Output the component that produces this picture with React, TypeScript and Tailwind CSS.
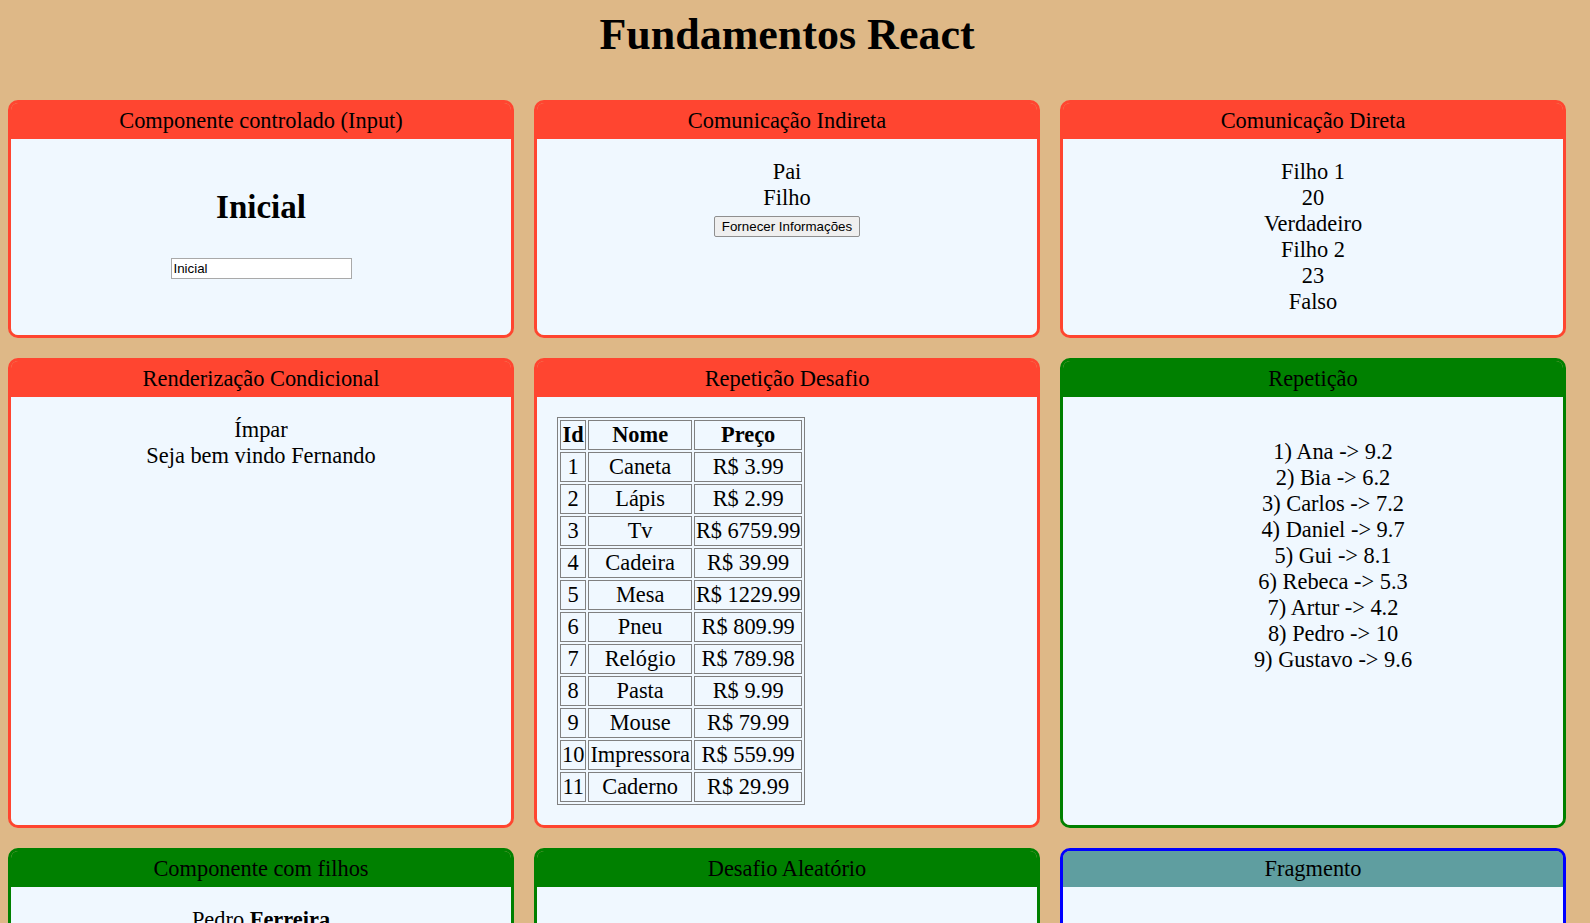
import React from "react";

type CardColor = "red" | "green" | "blue";

const cardStyles: Record<CardColor, { border: string; title: string }> = {
  red: { border: "border-[#ff4530]", title: "bg-[#ff4530]" },
  green: { border: "border-[#008000]", title: "bg-[#008000]" },
  blue: { border: "border-[#0000ff]", title: "bg-[#5f9ea0]" },
};

function Card({
  titulo,
  color = "red",
  children,
}: {
  titulo: string;
  color?: CardColor;
  children?: React.ReactNode;
}) {
  const s = cardStyles[color];
  return (
    <div className={`w-[506px] flex flex-col rounded-[10px] border-[3px] overflow-hidden ${s.border}`}>
      <div className={`${s.title} text-center text-[22.4px] p-[5px]`}>{titulo}</div>
      <div className="flex-1 bg-[#f0f8ff] p-[20px] text-center text-[22.4px]">{children}</div>
    </div>
  );
}

const produtos = [
  { id: 1, nome: "Caneta", preco: 3.99 },
  { id: 2, nome: "Lápis", preco: 2.99 },
  { id: 3, nome: "Tv", preco: 6759.99 },
  { id: 4, nome: "Cadeira", preco: 39.99 },
  { id: 5, nome: "Mesa", preco: 1229.99 },
  { id: 6, nome: "Pneu", preco: 809.99 },
  { id: 7, nome: "Relógio", preco: 789.98 },
  { id: 8, nome: "Pasta", preco: 9.99 },
  { id: 9, nome: "Mouse", preco: 79.99 },
  { id: 10, nome: "Impressora", preco: 559.99 },
  { id: 11, nome: "Caderno", preco: 29.99 },
];

const alunos = [
  { id: 1, nome: "Ana", nota: 9.2 },
  { id: 2, nome: "Bia", nota: 6.2 },
  { id: 3, nome: "Carlos", nota: 7.2 },
  { id: 4, nome: "Daniel", nota: 9.7 },
  { id: 5, nome: "Gui", nota: 8.1 },
  { id: 6, nome: "Rebeca", nota: 5.3 },
  { id: 7, nome: "Artur", nota: 4.2 },
  { id: 8, nome: "Pedro", nota: 10 },
  { id: 9, nome: "Gustavo", nota: 9.6 },
];

const cell = "border border-[#808080] px-[1px] py-[1px] text-center";

export default function App() {
  const [texto, setTexto] = React.useState("Inicial");

  return (
    <div className="min-h-screen bg-[#deb887] text-black font-['Liberation_Serif','Times_New_Roman',serif] leading-[normal]">
      <div className="w-[1574px] px-[8px] pt-[9px] pb-[40px]">
        <h1 className="text-center text-[44px] font-bold leading-[51px] mb-[40px]">
          Fundamentos React
        </h1>

        <div className="flex flex-wrap gap-x-[20px] gap-y-[20px]">
          <Card titulo="Componente controlado (Input)">
            <h2 className="text-[33px] font-bold leading-[38px] mt-[29px]">{texto}</h2>
            <input
              type="text"
              value={texto}
              onChange={(e) => setTexto(e.target.value)}
              className="block mx-auto mt-[32px] w-[181px] h-[21px] bg-white border border-[#a9a9a9] px-[2px] text-left text-[13.33px] leading-[normal] font-['Liberation_Sans',Arial,sans-serif] outline-none"
            />
          </Card>

          <Card titulo="Comunicação Indireta">
            <div>Pai</div>
            <div>Filho</div>
            <div>
              <button className="inline-block align-baseline bg-[#efefef] border border-[#8f8f8f] rounded-[2px] px-[7px] py-[2px] text-[13.33px] leading-[normal] font-['Liberation_Sans',Arial,sans-serif]">
                Fornecer Informações
              </button>
            </div>
          </Card>

          <Card titulo="Comunicação Direta">
            <div>Filho 1</div>
            <div>20</div>
            <div>Verdadeiro</div>
            <div>Filho 2</div>
            <div>23</div>
            <div>Falso</div>
          </Card>

          <Card titulo="Renderização Condicional">
            <div>Ímpar</div>
            <div>Seja bem vindo Fernando</div>
          </Card>

          <Card titulo="Repetição Desafio">
            <table className="border-separate border-spacing-[2px] border border-[#808080]">
              <thead>
                <tr>
                  <th className={cell}>Id</th>
                  <th className={cell}>Nome</th>
                  <th className={cell}>Preço</th>
                </tr>
              </thead>
              <tbody>
                {produtos.map((p) => (
                  <tr key={p.id}>
                    <td className={cell}>{p.id}</td>
                    <td className={cell}>{p.nome}</td>
                    <td className={cell}>R$ {p.preco}</td>
                  </tr>
                ))}
              </tbody>
            </table>
          </Card>

          <Card titulo="Repetição" color="green">
            <ul className="my-[22.4px] pl-[40px]">
              {alunos.map((a) => (
                <li key={a.id}>
                  {a.id}) {a.nome} -&gt; {a.nota}
                </li>
              ))}
            </ul>
          </Card>

          <Card titulo="Componente com filhos" color="green">
            <div>
              Pedro <strong>Ferreira</strong>
            </div>
            <ul className="my-[22.4px] pl-[40px]">
              <li>Ana Ferreira</li>
              <li>Gui Ferreira</li>
              <li>Carla Ferreira</li>
            </ul>
          </Card>

          <Card titulo="Desafio Aleatório" color="green">
            <h2 className="text-[33px] font-bold mt-[30px]">Valor Aleatório</h2>
            <div>Min: 1</div>
            <div>Max: 60</div>
          </Card>

          <Card titulo="Fragmento" color="blue">
            <h2 className="text-[33px] font-bold mt-[30px]">Fragmento</h2>
            <div>Cuidado com esse erro</div>
          </Card>
        </div>
      </div>
    </div>
  );
}
